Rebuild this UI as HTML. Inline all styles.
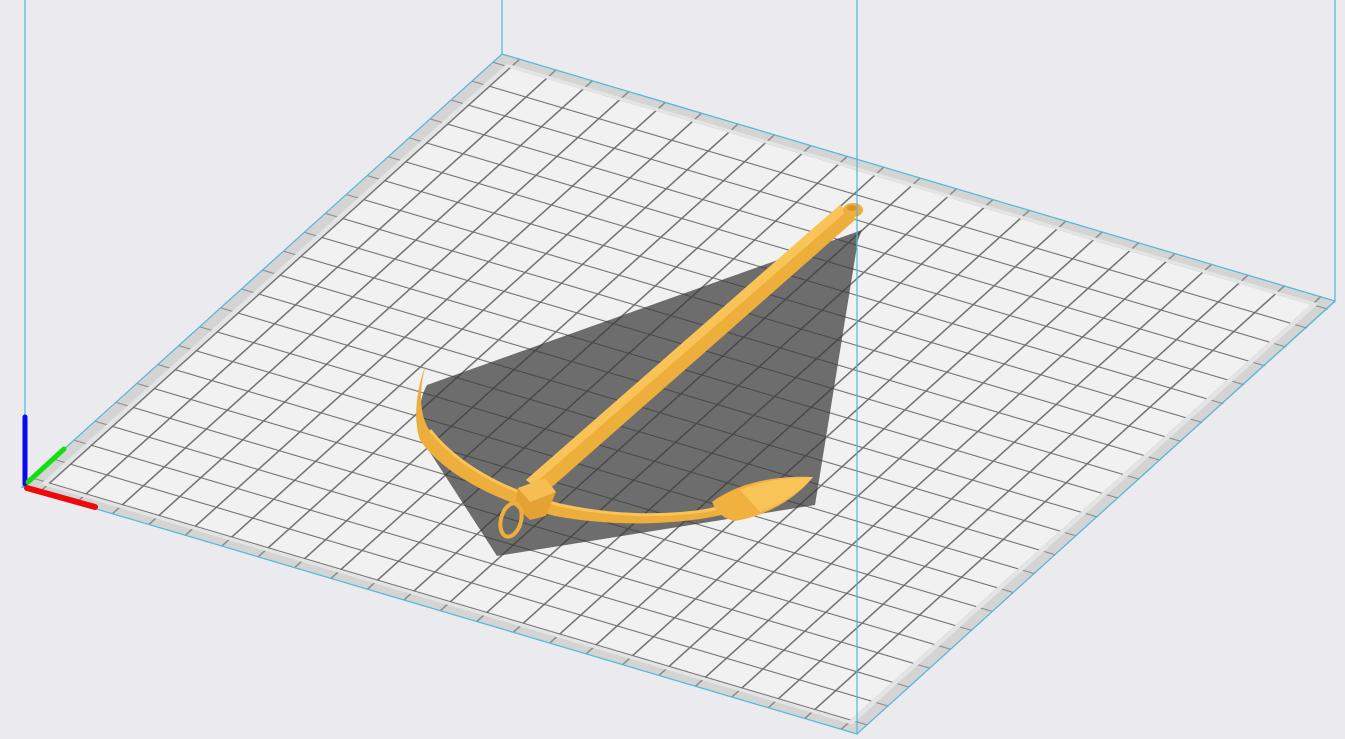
<!DOCTYPE html>
<html><head><meta charset="utf-8"><style>
html,body{margin:0;padding:0;background:#eaeaef;width:1345px;height:739px;overflow:hidden}
svg{display:block}
</style></head><body>
<svg width="1345" height="739" viewBox="0 0 1345 739" xmlns="http://www.w3.org/2000/svg">
<defs>
<pattern id="g" x="20" y="20" width="43.64" height="43.64" patternUnits="userSpaceOnUse">
<rect width="43.64" height="43.64" fill="#f1f1f1"/>
<path d="M0 0H43.64M0 0V43.64" stroke="#6e6e6e" stroke-width="4" fill="none"/>
</pattern>
<pattern id="r" x="20" y="20" width="43.64" height="43.64" patternUnits="userSpaceOnUse">
<rect width="43.64" height="43.64" fill="#d4d4d4"/>
<path d="M0 0H43.64M0 0V43.64" stroke="#8a8a8a" stroke-width="4" fill="none"/>
</pattern>
</defs>
<rect width="1345" height="739" fill="#eaeaef"/>
<g stroke="#4fb8d8" stroke-width="1.2">
<line x1="25" y1="0" x2="25" y2="487"/>
<line x1="502" y1="0" x2="502" y2="54"/>
<line x1="1335" y1="0" x2="1335" y2="301"/>
</g>
<g transform="matrix(0.835,0.247,0.48,-0.433,22,487)">
<rect x="0" y="0" width="1000" height="1000" fill="url(#r)"/>
<rect x="14" y="14" width="972" height="972" fill="#e4e4e4"/>
<rect x="20" y="20" width="960" height="960" fill="url(#g)"/>
</g>
<polygon points="22,487 502,54 1335,301 857,734" fill="none" stroke="#4fb8d8" stroke-width="1.2"/>
<!-- shadow -->
<path d="M862,230 L427,385 C418,400 418,425 422,440 L497,556 L815,505 L858,240 Z" fill="#3a3a3a" fill-opacity="0.72"/>
<!-- anchor stock/arms -->
<path d="M426,364 C420,385 418,410 428,428 C450,460 500,490 560,505 C620,518 680,518 720,505 L740,500 L742,510 C690,525 620,528 555,516 C490,500 440,470 420,440 C413,420 416,390 426,364 Z" fill="#eeae3c"/>
<path d="M430,430 C455,462 500,490 560,505 C620,518 680,518 735,505" stroke="#f7c45a" stroke-width="3" fill="none"/>
<!-- fluke -->
<path d="M712,502 C735,485 770,475 813,477 C795,500 765,516 735,521 C722,519 716,510 712,502 Z" fill="#f0b13f"/>
<path d="M740,490 C765,480 790,477 813,477 C800,492 780,505 760,512" fill="#f8c458"/>
<!-- shank -->
<path d="M840,205 L856,219 L544,494 L526,480 Z" fill="#eeae3c"/>
<path d="M840,205 L847,211 L533,485 L526,480 Z" fill="#f8c458"/>
<!-- top eye -->
<ellipse cx="853" cy="210" rx="10" ry="7" fill="#eeae3c"/>
<ellipse cx="852" cy="208" rx="5" ry="3" fill="#d9952a"/>
<!-- block -->
<path d="M518,488 L545,478 L556,492 L546,516 L530,520 L515,506 Z" fill="#e3a233"/>
<path d="M518,488 L545,478 L556,492 L530,502 Z" fill="#f5bd52"/>
<!-- ring -->
<ellipse cx="511" cy="520" rx="10" ry="17" transform="rotate(15 511 520)" fill="none" stroke="#eeae3c" stroke-width="4"/>
<!-- axes -->
<line x1="25" y1="417" x2="25" y2="484" stroke="#0a0aee" stroke-width="5" stroke-linecap="round"/>
<line x1="28" y1="482" x2="64" y2="449" stroke="#10e010" stroke-width="5" stroke-linecap="round"/>
<line x1="27" y1="488" x2="95" y2="507" stroke="#ee0a0a" stroke-width="6" stroke-linecap="round"/>
<line x1="857" y1="0" x2="857" y2="734" stroke="#4fb8d8" stroke-width="1.2"/>
</svg>
</body></html>
